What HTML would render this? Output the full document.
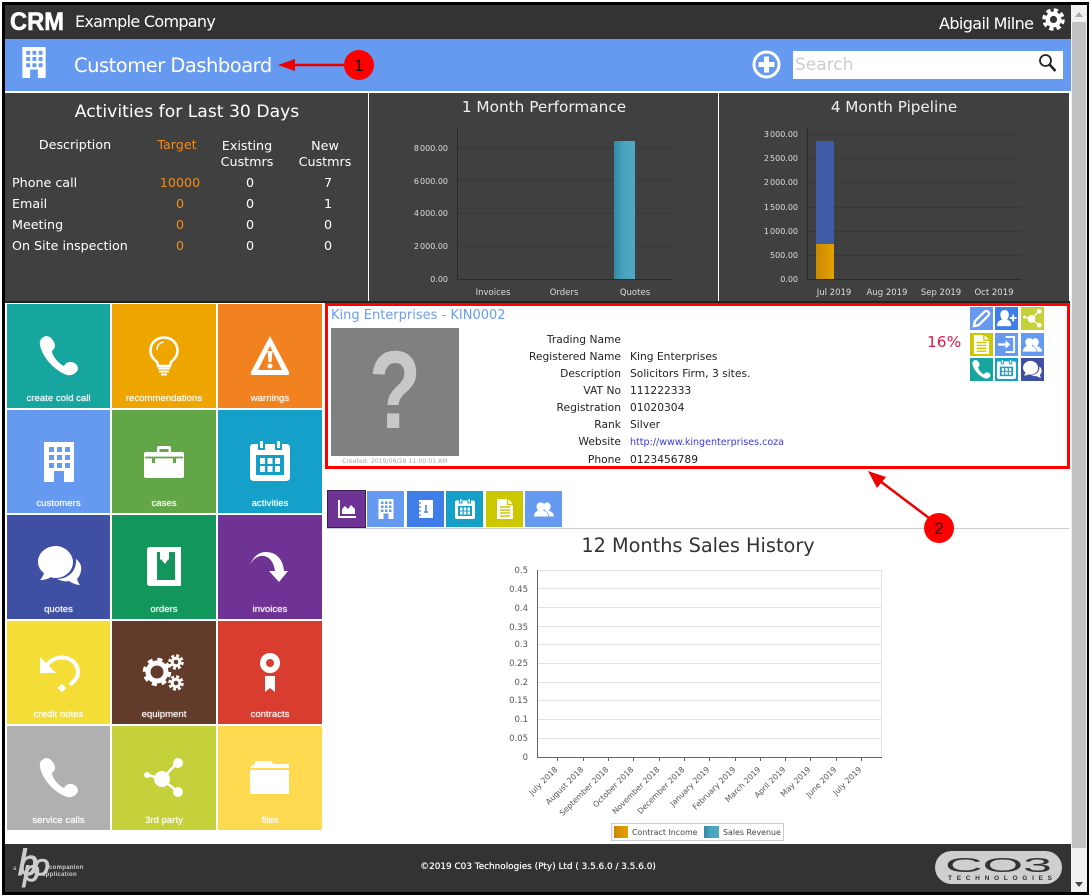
<!DOCTYPE html>
<html lang="en">
<head>
<meta charset="utf-8">
<title>Customer Dashboard</title>
<style>
html,body{margin:0;padding:0;width:1092px;height:896px;overflow:hidden;background:#fff}
body{position:relative;font-family:"DejaVu Sans","Liberation Sans",sans-serif;color:#222}
.a{position:absolute}
.t{position:absolute;white-space:nowrap;line-height:1}
.c{text-align:center;transform:translateX(-50%)}
.r{text-align:right;transform:translateX(-100%)}
.tile{position:absolute;color:#fff}
.tile svg{position:absolute;left:50%;top:32px;margin-left:-20px;width:40px;height:40px;overflow:visible}
.tile span{position:absolute;left:0;right:0;bottom:3px;text-align:center;font:9.600px/12px "Liberation Sans",sans-serif;text-shadow:0 0 1px rgba(255,255,255,.7)}
.tab{position:absolute;top:491px;height:36px}
.tab svg{position:absolute;left:50%;top:50%;width:20px;height:20px;margin:-10px 0 0 -10px;overflow:visible}
.act{position:absolute;width:23px;height:23px}
.act svg{position:absolute;left:2px;top:2px;width:19px;height:19px;overflow:visible}
.lbl{position:absolute;left:330px;width:291px;text-align:right;font-size:10.7px;line-height:17px;color:#222;white-space:nowrap}
.val{position:absolute;left:630px;font-size:10.7px;line-height:17px;color:#222;white-space:nowrap}
.w{color:#fff;font-size:12.7px}
.o{color:#f28c1a;font-size:12.7px}
</style>
</head>
<body>
<svg width="0" height="0" style="position:absolute">
<defs>
<symbol id="i-phone" viewBox="0 0 40 40" overflow="visible"><path fill="#fff" d="M7 0C3 1 0 4 1 9C3 20 14 34 28 39C33 40 38 37 39 33C39 29 36 26 31 26C28 26 26 28 25 30C20 28 13 20 13 15C15 13 16 12 16 9C15 5 12 0 7 0Z"/></symbol>
<symbol id="i-building" viewBox="0 0 40 40" overflow="visible"><path fill="#fff" d="M5 0H35V40H25V29H15V40H5Z"/><g fill="#6699f0"><rect x="10" y="5" width="5" height="5"/><rect x="18" y="5" width="5" height="5"/><rect x="26" y="5" width="5" height="5"/><rect x="10" y="13" width="5" height="5"/><rect x="18" y="13" width="5" height="5"/><rect x="26" y="13" width="5" height="5"/><rect x="10" y="21" width="5" height="5"/><rect x="18" y="21" width="5" height="5"/><rect x="26" y="21" width="5" height="5"/></g></symbol>
<symbol id="i-cal" viewBox="0 0 40 40" overflow="visible"><path fill="#fff" d="M3 3H8V9H15V3H25V9H32V3H36Q40 3 40 7V36Q40 40 36 40H4Q0 40 0 36V7Q0 3 3 3Z"/><rect x="6" y="14" width="28" height="20" fill="currentColor"/><g fill="#fff"><rect x="10" y="17" width="5" height="6"/><rect x="17.5" y="17" width="5" height="6"/><rect x="25" y="17" width="5" height="6"/><rect x="10" y="25" width="5" height="6"/><rect x="17.5" y="25" width="5" height="6"/><rect x="25" y="25" width="5" height="6"/></g><path fill="#fff" d="M10 0H13V7H10ZM27 0H30V7H27Z"/></symbol>
<symbol id="i-bubbles" viewBox="0 0 44 40" overflow="visible"><path fill="#fff" d="M35 16C35 8 27 0 18 0C8 0 0 7 0 16C0 21 3 25 6 27C5 30 4 32 2 34C6 34 10 33 13 31C15 32 16 32 18 32C27 32 35 25 35 16Z"/><path fill="#fff" d="M38 13C42 16 44 20 43 25C42 29 41 31 39 33C40 36 41 38 42 39C38 39 34 37 31 35C27 36 24 35 19 33C29 33 39 26 38 13Z"/></symbol>
<symbol id="i-share" viewBox="0 0 40 40" overflow="visible"><path stroke="#fff" stroke-width="2.5" d="M4 17L18 21L34 4M18 21L34 34" fill="none"/><circle cx="18" cy="21" r="8" fill="#fff"/><circle cx="34" cy="5" r="5" fill="#fff"/><circle cx="34" cy="34" r="5" fill="#fff"/><circle cx="3" cy="17" r="3" fill="#fff"/></symbol>
<symbol id="i-doc" viewBox="0 0 20 20" overflow="visible"><path fill="#fff" d="M2 0H13L18 5V20H2Z"/><path stroke="currentColor" stroke-width="1.4" d="M5 8H15M5 11H15M5 14H15M5 17H15M12.500 0V5.500H18" fill="none"/></symbol>
<symbol id="i-people" viewBox="0 0 24 20" overflow="visible"><path fill="#fff" d="M15 2C18 2 20 4 20 7C20 9 19 11 17.500 12C20 13 24 14 24 19H18C18 15 15 13 13.500 12C12.500 11 12 9 12 7C12 4 13 2 15 2Z"/><path fill="#fff" d="M8 2C11 2 13 4 13 7C13 10 11.500 11 11 12C14 13 17 14 17 19H0C0 14 3 13 5 12C4 11 3 9 3 7C3 4 5 2 8 2Z"/></symbol>
</defs>
</svg>

<!-- outer window frame -->
<div class="a" style="left:2px;top:2px;width:1087px;height:893px;background:#000"></div>
<div class="a" style="left:5px;top:5px;width:1082px;height:887px;background:#fff"></div>

<!-- top bar -->
<div class="a" style="left:5px;top:5px;width:1066px;height:34px;background:#333"></div>
<svg class="a" style="left:8px;top:8px" width="60" height="26" viewBox="0 0 60 26"><text x="2" y="22" font-family="Liberation Sans" font-weight="700" font-size="25" fill="#fff" stroke="#fff" stroke-width=".6" textLength="54" lengthAdjust="spacingAndGlyphs">CRM</text></svg>
<div class="t" style="left:75px;top:13px;font:16px/18px 'DejaVu Sans',sans-serif;color:#fff;letter-spacing:-.7px">Example Company</div>
<div class="t" style="left:939px;top:15px;font:16px/18px 'DejaVu Sans',sans-serif;color:#fff;letter-spacing:-.6px">Abigail Milne</div>
<svg class="a" style="left:1042px;top:8px" width="23" height="23" viewBox="0 0 24 24"><circle cx="12" cy="12" r="9.500" fill="none" stroke="#fff" stroke-width="4.500" stroke-dasharray="4.200 3.260"/><circle cx="12" cy="12" r="6" fill="none" stroke="#fff" stroke-width="4.500"/></svg>

<!-- blue title bar -->
<div class="a" style="left:5px;top:39px;width:1066px;height:52px;background:#6699f0"></div>
<svg class="a" style="left:14px;top:47px;color:#6699f0" width="40" height="31"><use href="#i-building" x="0" y="0" width="40" height="31"/></svg>
<div class="t" style="left:74px;top:54px;font:19.500px/23px 'DejaVu Sans',sans-serif;color:#fff;letter-spacing:-.5px">Customer Dashboard</div>
<svg class="a" style="left:752px;top:50px" width="29" height="29" viewBox="0 0 29 29"><circle cx="14.500" cy="14.500" r="12.500" fill="none" stroke="#fff" stroke-width="3"/><path d="M14.500 6.500V22.500M6.500 14.500H22.500" stroke="#fff" stroke-width="5"/></svg>
<div class="a" style="left:793px;top:51px;width:270px;height:28px;background:#fff"></div>
<div class="t" style="left:795px;top:56px;font:17px/18px 'DejaVu Sans',sans-serif;color:#ccc">Search</div>
<svg class="a" style="left:1038px;top:53px" width="19" height="20" viewBox="0 0 19 20"><circle cx="7.500" cy="7.500" r="5.500" fill="none" stroke="#222" stroke-width="1.800"/><path d="M11.500 11.500L17.500 18" stroke="#222" stroke-width="2.500"/></svg>

<!-- dark panels -->
<div class="a" style="left:5px;top:93px;width:363px;height:208px;background:#404040"></div>
<div class="a" style="left:369px;top:93px;width:349px;height:208px;background:#404040"></div>
<div class="a" style="left:719px;top:93px;width:350px;height:208px;background:#404040"></div>
<div class="a" style="left:5px;top:301px;width:1065px;height:2px;background:#222"></div>

<div class="t c" style="left:187px;top:103px;font-size:17.200px;line-height:18px;color:#fff">Activities for Last 30 Days</div>
<div class="t c w" style="left:75px;top:138px;line-height:14px">Description</div>
<div class="t c o" style="left:177px;top:138px;line-height:14px">Target</div>
<div class="t c w" style="left:247px;top:138px;line-height:16px;text-align:center">Existing<br>Custmrs</div>
<div class="t c w" style="left:325px;top:138px;line-height:16px;text-align:center">New<br>Custmrs</div>
<div class="t w" style="left:12px;top:176px;line-height:14px">Phone call</div>
<div class="t w" style="left:12px;top:197px;line-height:14px">Email</div>
<div class="t w" style="left:12px;top:218px;line-height:14px">Meeting</div>
<div class="t w" style="left:12px;top:239px;line-height:14px">On Site inspection</div>
<div class="t c o" style="left:180px;top:176px;line-height:14px">10000</div>
<div class="t c o" style="left:180px;top:197px;line-height:14px">0</div>
<div class="t c o" style="left:180px;top:218px;line-height:14px">0</div>
<div class="t c o" style="left:180px;top:239px;line-height:14px">0</div>
<div class="t c w" style="left:250px;top:176px;line-height:14px">0</div>
<div class="t c w" style="left:250px;top:197px;line-height:14px">0</div>
<div class="t c w" style="left:250px;top:218px;line-height:14px">0</div>
<div class="t c w" style="left:250px;top:239px;line-height:14px">0</div>
<div class="t c w" style="left:328px;top:176px;line-height:14px">7</div>
<div class="t c w" style="left:328px;top:197px;line-height:14px">1</div>
<div class="t c w" style="left:328px;top:218px;line-height:14px">0</div>
<div class="t c w" style="left:328px;top:239px;line-height:14px">0</div>

<div class="t c" style="left:544px;top:98px;font-size:15.300px;line-height:18px;color:#f0f0f0">1 Month Performance</div>
<div class="t c" style="left:894px;top:98px;font-size:15.200px;line-height:18px;color:#f0f0f0">4 Month Pipeline</div>

<svg class="a" style="left:0;top:0;pointer-events:none" width="1092" height="896" font-family="DejaVu Sans" font-size="8.500" fill="#ddd">
<defs>
<linearGradient id="teal" x1="0" x2="1"><stop offset="0" stop-color="#338aa5"/><stop offset=".5" stop-color="#4aa4bf"/><stop offset="1" stop-color="#4fa9c3"/></linearGradient>
<linearGradient id="gold" x1="0" x2="1"><stop offset="0" stop-color="#c98a00"/><stop offset="1" stop-color="#e5a200"/></linearGradient>
</defs>
<!-- chart 1 -->
<g stroke="#383838" fill="none"><path d="M458 147.500H672M458 180.500H672M458 213.500H672M458 246.500H672"/></g>
<path d="M457.500 128V279.500H672" stroke="#2a2a2a" fill="none"/>
<rect x="614" y="141" width="21" height="138" fill="url(#teal)"/>
<g text-anchor="end" font-size="8" word-spacing="-1.500"><text x="448" y="151">8 000.00</text><text x="448" y="184">6 000.00</text><text x="448" y="216">4 000.00</text><text x="448" y="249">2 000.00</text><text x="448" y="282">0.00</text></g>
<g text-anchor="middle"><text x="493" y="295">Invoices</text><text x="564" y="295">Orders</text><text x="635" y="295">Quotes</text></g>
<!-- chart 2 -->
<g stroke="#383838" fill="none"><path d="M807 134.500H1022M807 158.500H1022M807 182.500H1022M807 207.500H1022M807 231.500H1022M807 255.500H1022"/></g>
<path d="M807.500 128V279.500H1022" stroke="#2a2a2a" fill="none"/>
<rect x="816" y="141" width="18" height="103" fill="#3f5ca6"/>
<rect x="816" y="244" width="18" height="35" fill="url(#gold)"/>
<g text-anchor="end" font-size="8" word-spacing="-1.500"><text x="798" y="137">3 000.00</text><text x="798" y="161">2 500.00</text><text x="798" y="185">2 000.00</text><text x="798" y="210">1 500.00</text><text x="798" y="234">1 000.00</text><text x="798" y="258">500.00</text><text x="798" y="282">0.00</text></g>
<g text-anchor="middle"><text x="834" y="295">Jul 2019</text><text x="887" y="295">Aug 2019</text><text x="941" y="295">Sep 2019</text><text x="994" y="295">Oct 2019</text></g>
</svg>

<!-- tiles -->
<div class="tile" style="left:7px;top:304px;width:103px;height:104px;background:#17a5a0"><svg><use href="#i-phone" width="40" height="40"/></svg><span>create cold call</span></div>
<div class="tile" style="left:112px;top:304px;width:104px;height:104px;background:#efa500"><svg viewBox="0 0 40 40"><path d="M12 25C8 22 6.500 18 6.500 14.500C6.500 7 12.500 1.500 20 1.500C27.500 1.500 33.500 7 33.500 14.500C33.500 18 32 22 28 25C26.500 26.500 26 28 26 30H14C14 28 13.500 26.500 12 25Z" fill="none" stroke="#fff" stroke-width="2.600"/><path d="M13 14C13 9 16 6.500 20 6" fill="none" stroke="#fff" stroke-width="1.500"/><path d="M14 32.500H26M15 35.500H25M17 38.500H23" stroke="#fff" stroke-width="2"/></svg><span>recommendations</span></div>
<div class="tile" style="left:218px;top:304px;width:104px;height:104px;background:#f2821f"><svg viewBox="0 0 40 40"><path d="M20 0L39 36Q40 39 37 39H3Q0 39 1 36Z" fill="#fff"/><path d="M20 10L32 34H8Z" fill="#f2821f"/><path d="M17.500 15H22.500L21.500 26H18.500Z" fill="#fff"/><circle cx="20" cy="30" r="2.500" fill="#fff"/></svg><span>warnings</span></div>

<div class="tile" style="left:7px;top:410px;width:103px;height:103px;background:#6699f0"><svg style="top:32px"><use href="#i-building" width="40" height="40"/></svg><span>customers</span></div>
<div class="tile" style="left:112px;top:410px;width:104px;height:103px;background:#62a647"><svg viewBox="0 0 40 40"><path d="M13 11V6Q13 4 15 4H25Q27 4 27 6V11H24.500V7H15.500V11Z" fill="#fff"/><path d="M2 10H38Q40 10 40 12V34Q40 36 38 36H2Q0 36 0 34V12Q0 10 2 10Z" fill="#fff"/><path d="M1 15.500H39" stroke="#62a647" stroke-width="1.800"/><rect x="8" y="15" width="3" height="6" fill="#62a647"/><rect x="29" y="15" width="3" height="6" fill="#62a647"/></svg><span>cases</span></div>
<div class="tile" style="left:218px;top:410px;width:104px;height:103px;background:#14a0c9;color:#14a0c9"><svg style="top:31px"><use href="#i-cal" width="40" height="40"/></svg><span style="color:#fff">activities</span></div>

<div class="tile" style="left:7px;top:515px;width:103px;height:104px;background:#3f4fa3"><svg style="top:31px;margin-left:-21px;width:44px"><use href="#i-bubbles" width="44" height="40"/></svg><span>quotes</span></div>
<div class="tile" style="left:112px;top:515px;width:104px;height:104px;background:#12965c"><svg viewBox="0 0 40 40"><path d="M6 0H37V39H6Q3 39 3 36V3Q3 0 6 0Z" fill="#fff"/><path d="M13 5H16V11L21 17L25 11V5H31V33H13Z" fill="#12965c"/><path d="M16 5H25V13L20.500 9L16 13Z" fill="#fff"/></svg><span>orders</span></div>
<div class="tile" style="left:218px;top:515px;width:104px;height:104px;background:#6e3394"><svg viewBox="0 0 40 40"><path d="M0 18C4 8 10 5 16 5C26 5 33 12 34 24H38L29 35L19 24H25C24 16 20 10 14 9C8 8 3 12 0 18Z" fill="#fff"/></svg><span>invoices</span></div>

<div class="tile" style="left:7px;top:621px;width:103px;height:103px;background:#f5dd38"><svg viewBox="0 0 40 40"><path d="M1 4V20H17Z" fill="#fff"/><path d="M7 14C10 8 16 4.500 23 4.500C32 4.500 39 11 39 19C39 25 35 28 31 32" fill="none" stroke="#fff" stroke-width="4"/><rect x="20" y="32" width="6" height="6" transform="rotate(45 23 35)" fill="#fff"/></svg><span>credit notes</span></div>
<div class="tile" style="left:112px;top:621px;width:104px;height:103px;background:#633b2a"><svg viewBox="0 0 44 40" style="top:30px;width:44px;margin-left:-20px"><g fill="none" stroke="#fff"><circle cx="13" cy="21" r="9" stroke-width="5"/><circle cx="13" cy="21" r="12.500" stroke-width="3.500" stroke-dasharray="5 4.820"/><circle cx="32" cy="11" r="3.800" stroke-width="3"/><circle cx="32" cy="11" r="6.500" stroke-width="2.500" stroke-dasharray="3 2.100"/><circle cx="32" cy="32" r="3.800" stroke-width="3"/><circle cx="32" cy="32" r="6.500" stroke-width="2.500" stroke-dasharray="3 2.100"/></g></svg><span>equipment</span></div>
<div class="tile" style="left:218px;top:621px;width:104px;height:103px;background:#d93d30"><svg viewBox="0 0 40 40"><circle cx="20" cy="10" r="7" fill="none" stroke="#fff" stroke-width="6"/><path d="M15 23H25V39L20 35L15 39Z" fill="#fff"/></svg><span>contracts</span></div>

<div class="tile" style="left:7px;top:726px;width:103px;height:104px;background:#b0b0b0"><svg><use href="#i-phone" width="40" height="40"/></svg><span>service calls</span></div>
<div class="tile" style="left:112px;top:726px;width:104px;height:104px;background:#c5d13b"><svg><use href="#i-share" width="40" height="40"/></svg><span>3rd party</span></div>
<div class="tile" style="left:218px;top:726px;width:104px;height:104px;background:#ffd94f"><svg viewBox="0 0 40 40"><path d="M0 9L5 6V4Q5 3 6 3H20Q21 3 22 4L24 6H39V10H0Z" fill="#fff"/><rect x="0" y="12" width="39" height="24" fill="#fff"/></svg><span>files</span></div>

<!-- customer card -->
<div class="t" style="left:331px;top:309px;font-size:13px;line-height:14px;color:#6d9cf2">King Enterprises - KIN0002</div>
<div class="a" style="left:331px;top:328px;width:128px;height:128px;background:#808080"></div>
<div class="t" style="left:395px;top:330px;font:700 110px/122px 'Liberation Sans',sans-serif;color:#c8c8c8;transform:translateX(-50%) scaleX(.78)">?</div>
<div class="t c" style="left:395px;top:458px;font-size:6.200px;line-height:8px;color:#aaa">Created: 2019/06/28 11:00:01 AM</div>

<div class="lbl" style="top:331px">Trading Name</div>
<div class="lbl" style="top:348px">Registered Name</div>
<div class="lbl" style="top:365px">Description</div>
<div class="lbl" style="top:382px">VAT No</div>
<div class="lbl" style="top:399px">Registration</div>
<div class="lbl" style="top:416px">Rank</div>
<div class="lbl" style="top:433px">Website</div>
<div class="lbl" style="top:451px">Phone</div>
<div class="val" style="top:348px">King Enterprises</div>
<div class="val" style="top:365px">Solicitors Firm, 3 sites.</div>
<div class="val" style="top:382px">111222333</div>
<div class="val" style="top:399px">01020304</div>
<div class="val" style="top:416px">Silver</div>
<div class="val" style="top:434px;color:#3a3ae0;font-size:9.550px">http://www.kingenterprises.coza</div>
<div class="val" style="top:451px">0123456789</div>
<div class="t" style="left:927px;top:334px;font-size:15.400px;line-height:16px;color:#d81b50">16%</div>

<!-- action buttons -->
<div class="act" style="left:970px;top:307px;background:#6699f0"><svg viewBox="0 0 20 20"><path d="M3 13L13 3Q15 1 17 3Q19 5 17 7L7 17L2 18Z" fill="none" stroke="#fff" stroke-width="2.400"/></svg></div>
<div class="act" style="left:995px;top:307px;background:#3f7de8"><svg viewBox="0 0 20 20"><path d="M8 1C11 1 12.500 3.500 12.500 6C12.500 8 11.500 10 10.500 11C13 12 15 13 15 18H0C0 13 3 12 5.500 11C4.500 10 3.500 8 3.500 6C3.500 3.500 5 1 8 1Z" fill="#fff"/><path d="M17 6V13M13.500 9.500H20.500" stroke="#fff" stroke-width="2"/></svg></div>
<div class="act" style="left:1021px;top:307px;background:#c5d13b"><svg viewBox="0 0 40 40"><use href="#i-share" width="40" height="40"/></svg></div>
<div class="act" style="left:970px;top:333px;background:#ccc800;color:#ccc800"><svg viewBox="0 0 20 20"><use href="#i-doc" width="20" height="20"/></svg></div>
<div class="act" style="left:995px;top:333px;background:#6699f0"><svg viewBox="0 0 20 20"><path d="M9 2H18V18H9" fill="none" stroke="#fff" stroke-width="2"/><path d="M1 10H11" stroke="#fff" stroke-width="2.500"/><path d="M9 5.500L14 10L9 14.500Z" fill="#fff"/></svg></div>
<div class="act" style="left:1021px;top:333px;background:#6699f0"><svg viewBox="0 0 24 20"><use href="#i-people" width="24" height="20"/></svg></div>
<div class="act" style="left:970px;top:358px;background:#17a5a0"><svg viewBox="0 0 40 40"><use href="#i-phone" width="40" height="40"/></svg></div>
<div class="act" style="left:995px;top:358px;background:#14a0c9;color:#14a0c9"><svg viewBox="0 0 40 40"><use href="#i-cal" width="40" height="40"/></svg></div>
<div class="act" style="left:1021px;top:358px;background:#3f4fa3"><svg viewBox="0 0 44 40"><use href="#i-bubbles" width="44" height="40"/></svg></div>

<!-- tabs -->
<div class="tab" style="left:327px;top:490px;width:39px;height:38px;background:#6e3394;box-shadow:inset 0 0 0 1px #3a2050"><svg viewBox="0 0 20 20"><path d="M2 1V18H19" fill="none" stroke="#fff" stroke-width="2"/><path d="M5 15V10L8 7L11 10L14 6L18 10V15Z" fill="#fff"/></svg></div>
<div class="tab" style="left:367px;width:37px;background:#6699f0;color:#6699f0"><svg viewBox="0 0 40 40" style="height:22px;margin-top:-11px"><use href="#i-building" width="40" height="40"/></svg></div>
<div class="tab" style="left:407px;width:37px;background:#3f7de8"><svg viewBox="0 0 20 20"><path d="M3 1H17V19H3Z" fill="#fff"/><path d="M2 4H5M2 8H5M2 12H5M2 16H5" stroke="#3f7de8" stroke-width="1.300"/><path d="M10 6V12M8 13H12" stroke="#3f7de8" stroke-width="1.500"/></svg></div>
<div class="tab" style="left:446px;width:37px;background:#14a0c9;color:#14a0c9"><svg viewBox="0 0 40 40"><use href="#i-cal" width="40" height="40"/></svg></div>
<div class="tab" style="left:486px;width:37px;background:#ccc800;color:#ccc800"><svg viewBox="0 0 20 20"><use href="#i-doc" width="20" height="20"/></svg></div>
<div class="tab" style="left:525px;width:37px;background:#6699f0"><svg viewBox="0 0 24 20"><use href="#i-people" width="24" height="20"/></svg></div>
<div class="a" style="left:327px;top:528px;width:742px;height:1px;background:#ccc"></div>

<!-- sales chart -->
<div class="t c" style="left:698px;top:535px;font-size:19.300px;line-height:21px;color:#333">12 Months Sales History</div>
<svg class="a" style="left:0;top:0" width="1092" height="896" font-family="DejaVu Sans" font-size="8.500" fill="#555">
<g stroke="#e2e2e2" fill="none"><path d="M537 570.500H882M537 588.500H882M537 607.500H882M537 626.500H882M537 644.500H882M537 663.500H882M537 682.500H882M537 700.500H882M537 719.500H882M537 738.500H882"/><path d="M881.500 570V757"/></g>
<path d="M537.500 570V757.500H882" stroke="#666" fill="none"/>
<path d="M557.500 757V761M583.500 757V761M608.500 757V761M633.500 757V761M659.500 757V761M684.500 757V761M709.500 757V761M735.500 757V761M760.500 757V761M785.500 757V761M810.500 757V761M836.500 757V761M861.500 757V761" stroke="#666"/>
<g text-anchor="end"><text x="528" y="573">0.5</text><text x="528" y="592">0.45</text><text x="528" y="611">0.4</text><text x="528" y="630">0.35</text><text x="528" y="647">0.3</text><text x="528" y="666">0.25</text><text x="528" y="685">0.2</text><text x="528" y="703">0.15</text><text x="528" y="722">0.1</text><text x="528" y="741">0.05</text><text x="528" y="760">0</text></g>
<g text-anchor="end" font-size="7.800">
<text transform="translate(558 770) rotate(-45)">July 2018</text>
<text transform="translate(584 770) rotate(-45)">August 2018</text>
<text transform="translate(609 770) rotate(-45)">September 2018</text>
<text transform="translate(634 770) rotate(-45)">October 2018</text>
<text transform="translate(660 770) rotate(-45)">November 2018</text>
<text transform="translate(685 770) rotate(-45)">December 2018</text>
<text transform="translate(710 770) rotate(-45)">January 2019</text>
<text transform="translate(736 770) rotate(-45)">February 2019</text>
<text transform="translate(761 770) rotate(-45)">March 2019</text>
<text transform="translate(786 770) rotate(-45)">April 2019</text>
<text transform="translate(811 770) rotate(-45)">May 2019</text>
<text transform="translate(837 770) rotate(-45)">June 2019</text>
<text transform="translate(862 770) rotate(-45)">July 2019</text>
</g>
<rect x="611.500" y="823.500" width="172" height="17" fill="#fff" stroke="#ccc"/>
<rect x="614" y="826" width="14" height="12" fill="url(#gold)"/>
<rect x="704" y="826" width="15" height="12" fill="url(#teal)"/>
<text x="632" y="835" fill="#444" font-size="7.900">Contract Income</text>
<text x="723" y="835" fill="#444" font-size="7.900">Sales Revenue</text>
</svg>

<!-- footer -->
<div class="a" style="left:5px;top:844px;width:1066px;height:48px;background:#333"></div>
<div class="t c" style="left:538px;top:862px;font-size:8.900px;line-height:11px;color:#fff;text-shadow:0 0 .5px #fff">©2019 C03 Technologies (Pty) Ltd ( 3.5.6.0 / 3.5.6.0)</div>
<svg class="a" style="left:10px;top:846px" width="80" height="44" viewBox="0 0 80 44" fill="#ccc" font-family="Liberation Sans">
<text x="3" y="24" font-size="6">a</text>
<text x="8" y="29" font-size="36" font-style="italic" fill="#ccc" stroke="#ccc" stroke-width="1">b</text>
<text x="23" y="29" font-size="30" font-style="italic" fill="#ccc" stroke="#ccc" stroke-width="1">o</text>
<text x="13" y="35" font-size="30" font-style="italic" fill="#ccc" stroke="#ccc" stroke-width="1">p</text>
<text x="39" y="23" font-size="6" font-weight="700" letter-spacing=".3">companion</text>
<text x="32" y="30" font-size="6" font-weight="700" letter-spacing=".3">application</text>
</svg>
<svg class="a" style="left:935px;top:851px" width="127" height="33" viewBox="0 0 127 33">
<rect x="0" y="0" width="127" height="33" rx="16.500" fill="#cfcfcf"/>
<text x="10" y="21" font-family="Liberation Sans" font-size="20" fill="#333" textLength="107" lengthAdjust="spacingAndGlyphs">CO3</text>
<text x="13" y="29" font-family="Liberation Sans" font-size="6.500" font-weight="700" fill="#333" textLength="104" lengthAdjust="spacing">TECHNOLOGIES</text>
</svg>

<!-- scrollbar -->
<div class="a" style="left:1071px;top:5px;width:16px;height:887px;background:#f1f1f1"></div>
<div class="a" style="left:1072px;top:22px;width:14px;height:826px;background:#c1c1c1"></div>
<div class="a" style="left:1075px;top:12px;width:0;height:0;border:4px solid transparent;border-top:0;border-bottom:5px solid #aaa"></div>
<div class="a" style="left:1075px;top:882px;width:0;height:0;border:4px solid transparent;border-bottom:0;border-top:5px solid #444"></div>

<!-- red annotations -->
<div class="a" style="left:325px;top:303px;width:739px;height:160px;border:3px solid #f00"></div>
<svg class="a" style="left:0;top:0" width="1092" height="896">
<path d="M345 65H292" stroke="#e00" stroke-width="2.500"/>
<path d="M278 65L295 59V71Z" fill="#e00"/>
<circle cx="359" cy="65" r="15" fill="#f00"/>
<path d="M929 518L880 481" stroke="#e00" stroke-width="2.500"/>
<path d="M868 471L886 477L877 488Z" fill="#e00"/>
<circle cx="939" cy="528" r="15" fill="#f00"/>
<text x="359" y="71" font-family="Liberation Sans" font-size="17" text-anchor="middle" fill="#111">1</text>
<text x="939" y="534" font-family="Liberation Sans" font-size="17" text-anchor="middle" fill="#111">2</text>
</svg>
</body>
</html>
